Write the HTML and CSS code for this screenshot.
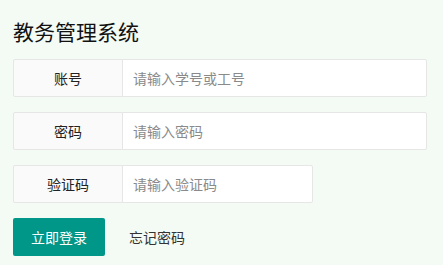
FILE: index.html
```html
<!DOCTYPE html>
<html lang="zh-CN">
<head>
<meta charset="utf-8">
<title>教务管理系统</title>
<link rel="stylesheet" href="styles.css">
</head>
<body>
<div class="page">
  <h2 class="title">教务管理系统</h2>
  <form class="form">
    <div class="item">
      <label class="label">账号</label>
      <input class="input" type="text" placeholder="请输入学号或工号">
    </div>
    <div class="item">
      <label class="label">密码</label>
      <input class="input" type="password" placeholder="请输入密码">
    </div>
    <div class="item item-inline">
      <label class="label">验证码</label>
      <input class="input" type="text" placeholder="请输入验证码">
    </div>
    <div class="actions">
      <button class="btn" type="button">立即登录</button>
      <a class="link" href="#">忘记密码</a>
    </div>
  </form>
</div>
</body>
</html>
```
FILE: styles.css
```css
html, body {
  margin: 0;
  padding: 0;
  background: #f4faf4;
}
body {
  font-family: "Noto Sans CJK SC", "Noto Sans", sans-serif;
  font-size: 14px;
  color: #333;
}
.page {
  padding: 16px 0 0 13px;
  width: 414px;
}
.title {
  margin: 0 0 13px;
  font-size: 21px;
  line-height: 30px;
  font-weight: normal;
  color: #111;
}
.form {
  margin: 0;
}
.item {
  display: flex;
  height: 38px;
  margin-bottom: 15px;
}
.item-inline {
  width: 300px;
}
.label {
  box-sizing: border-box;
  width: 110px;
  flex: none;
  height: 38px;
  line-height: 20px;
  padding: 8px 15px;
  text-align: center;
  background: #fafafa;
  border: 1px solid #e6e6e6;
  border-radius: 2px 0 0 2px;
  color: #222;
}
.input {
  box-sizing: border-box;
  flex: 1;
  min-width: 0;
  height: 38px;
  margin: 0 0 0 -1px;
  padding: 0 10px;
  border: 1px solid #e6e6e6;
  border-radius: 0 2px 2px 0;
  background: #fff;
  font-family: inherit;
  font-size: 14px;
  color: #333;
  outline: none;
}
.input::placeholder {
  color: #8a8a8a;
}
.actions {
  display: flex;
  align-items: center;
}
.btn {
  height: 38px;
  line-height: 38px;
  padding: 0 18px;
  border: none;
  border-radius: 2px;
  background: #009688;
  color: #fff;
  font-family: inherit;
  font-size: 14px;
}
.link {
  margin-left: 24px;
  color: #333;
  text-decoration: none;
}
```
